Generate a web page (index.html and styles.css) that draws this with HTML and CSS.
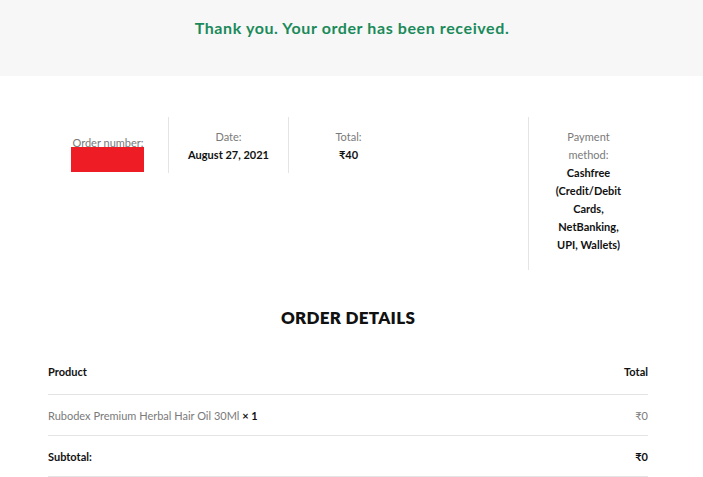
FILE: index.html
```html
<!DOCTYPE html>
<html lang="en">
<head>
    <meta charset="UTF-8">
    <meta name="viewport" content="width=device-width, initial-scale=1.0">
    <link rel="stylesheet" href="styles.css">
    <title>Order received</title>
</head>
<body>

<div class="notice">
    <p class="notice-text">Thank you. Your order has been received.</p>
</div>

<div class="order">
    <ul class="overview">
        <li class="overview-item item-number">
            <span class="label">Order number:</span>
            <span class="redacted"></span>
        </li>
        <li class="overview-item item-date">
            <span class="label">Date:</span>
            <strong>August 27, 2021</strong>
        </li>
        <li class="overview-item item-total">
            <span class="label">Total:</span>
            <strong>&#8377;40</strong>
        </li>
        <li class="overview-item item-empty"></li>
        <li class="overview-item item-method">
            <span class="label">Payment method:</span>
            <strong>Cashfree (Credit/Debit Cards, NetBanking, UPI, Wallets)</strong>
        </li>
    </ul>

    <h2 class="details-title">Order details</h2>

    <table class="details">
        <thead>
            <tr>
                <th>Product</th>
                <th class="right">Total</th>
            </tr>
        </thead>
        <tbody>
            <tr>
                <td class="product">Rubodex Premium Herbal Hair Oil 30Ml <strong>&times;&nbsp;1</strong></td>
                <td class="right product">&#8377;0</td>
            </tr>
        </tbody>
        <tfoot>
            <tr>
                <th>Subtotal:</th>
                <th class="right">&#8377;0</th>
            </tr>
        </tfoot>
    </table>
</div>

</body>
</html>
```

FILE: styles.css
```css
body {
    margin: 0;
    font-family: Lato, "Noto Sans", sans-serif;
    color: #111;
    background: #fff;
}

.notice {
    background-color: #f7f7f7;
    height: 76px;
    padding-top: 18px;
    box-sizing: border-box;
}

.notice-text {
    margin: 0;
    text-align: center;
    font-size: 16px;
    font-weight: 700;
    letter-spacing: 0.6px;
    color: #1b8a5a;
    line-height: 20px;
    padding-left: 1px;
}

.order {
    width: 600px;
    margin-left: 48px;
    padding-top: 41px;
}

.overview {
    list-style: none;
    margin: 0;
    padding: 0;
    display: grid;
    grid-template-columns: repeat(5, 120px);
    align-items: start;
    font-size: 11px;
    line-height: 18px;
    text-align: center;
}

.overview-item {
    display: flex;
    flex-direction: column;
    align-items: center;
    padding: 11px 10px 9px;
}

.overview-item strong {
    font-weight: 700;
    color: #111;
}

.label {
    color: #7a7a7a;
}

.item-number {
    padding-top: 17px;
}

.redacted {
    display: block;
    width: 73px;
    height: 25px;
    margin-top: -5px;
    margin-left: -1px;
    background-color: #ee1c25;
    position: relative;
}

.item-date,
.item-total {
    border-left: 1px solid #e4e4e4;
}

.item-method {
    border-left: 1px solid #e4e4e4;
    padding: 11px 22px 16px;
}

.details-title {
    margin: 36px 0 0;
    text-align: center;
    font-size: 17px;
    font-weight: 800;
    letter-spacing: 0.3px;
    text-transform: uppercase;
    line-height: 24px;
}

.details {
    width: 100%;
    border-collapse: collapse;
    margin-top: 18px;
    font-size: 11px;
}

.details th,
.details td {
    text-align: left;
    height: 40px;
    padding: 0;
    border-bottom: 1px solid #e4e4e4;
}

.details th {
    font-weight: 700;
    color: #111;
}

.details thead th {
    height: 46px;
}

.details .right {
    text-align: right;
}

.details .product {
    color: #7a7a7a;
}

.details .product strong {
    color: #111;
}
```
